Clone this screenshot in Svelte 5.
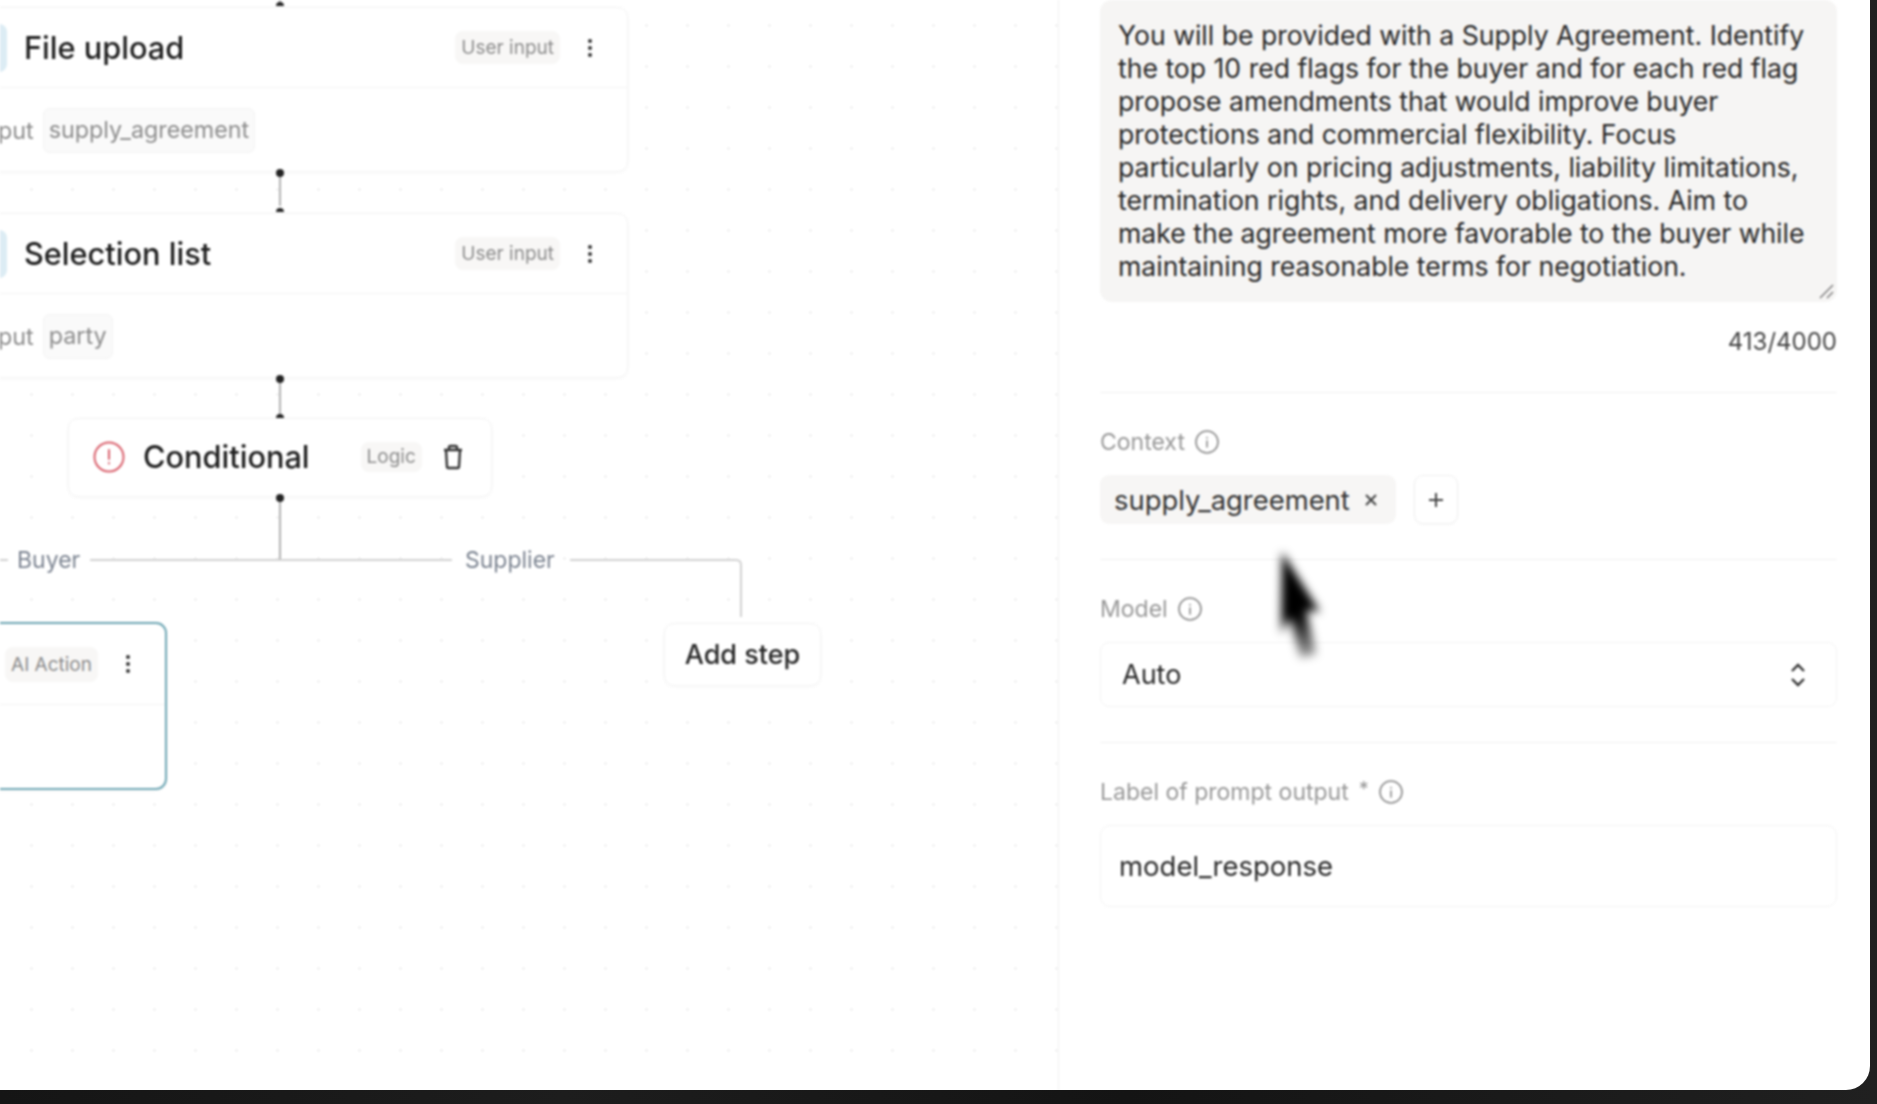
<script>
	const promptText =
		'You will be provided with a Supply Agreement. Identify the top 10 red flags for the buyer and for each red flag propose amendments that would improve buyer protections and commercial flexibility. Focus particularly on pricing adjustments, liability limitations, termination rights, and delivery obligations. Aim to make the agreement more favorable to the buyer while maintaining reasonable terms for negotiation.';

	const inputSteps = [
		{ title: 'File upload', output: 'supply_agreement', top: 7 },
		{ title: 'Selection list', output: 'party', top: 213 }
	];
</script>

{#snippet kebab()}
	<svg class="kebab" width="6" height="20" viewBox="0 0 6 20">
		<circle cx="3" cy="3" r="2" />
		<circle cx="3" cy="10" r="2" />
		<circle cx="3" cy="17" r="2" />
	</svg>
{/snippet}

{#snippet info()}
	<svg class="info" width="24" height="24" viewBox="0 0 24 24" fill="none">
		<circle cx="12" cy="12" r="11" />
		<path d="M12 11v6M12 7.500v.5" />
	</svg>
{/snippet}

<div class="desktop">
	<div class="window">
		<section class="canvas">
			{#each inputSteps as step}
				<article class="node step" style="top: {step.top}px">
					<header class="node-head">
						<span class="tile"></span>
						<h3>{step.title}</h3>
						<span class="badge">User input</span>
						{@render kebab()}
					</header>
					<div class="node-body">
						<span class="io">Input</span>
						<span class="var">{step.output}</span>
					</div>
				</article>
			{/each}

			<article class="node conditional">
				<svg width="32" height="32" viewBox="0 0 32 32" fill="none" class="alert">
					<circle cx="16" cy="16" r="14.500" />
					<path d="M16 9v9M16 22v.5" />
				</svg>
				<h3>Conditional</h3>
				<span class="badge">Logic</span>
				<svg width="22" height="26" viewBox="0 0 22 26" fill="none" class="trash">
					<path d="M2 6h18M7 6V3.500A1.500 1.500 0 0 1 8.500 2h5A1.500 1.500 0 0 1 15 3.500V6M4 6l1 16.500A1.500 1.500 0 0 0 6.500 24h9a1.500 1.500 0 0 0 1.500-1.500L18 6" />
				</svg>
			</article>

			<article class="node action">
				<header class="node-head">
					<span class="badge">AI Action</span>
					{@render kebab()}
				</header>
			</article>

			<button class="node add-step">Add step</button>

			<svg class="wires" width="1058" height="700" viewBox="0 0 1058 700" fill="none">
				<path class="wire" d="M280 0v4M280 176v30M280 382v33M280 500v59" />
				<path class="branch" d="M0 560h8M90 560h362M570 560h166q5 0 5 5v52" />
				<path class="pin" d="M276 6a4 4 0 0 1 8 0zM276 212a4 4 0 0 1 8 0zM276 418a4 4 0 0 1 8 0z" />
				<circle class="pin" cx="280" cy="173" r="4" />
				<circle class="pin" cx="280" cy="379" r="4" />
				<circle class="pin" cx="280" cy="498" r="4" />
			</svg>
			<span class="branch-label buyer">Buyer</span>
			<span class="branch-label supplier">Supplier</span>
		</section>

		<aside class="panel">
			<div class="prompt">
				{promptText}
				<svg class="grip" width="16" height="16" viewBox="0 0 16 16" fill="none">
					<path d="M2 15 15 2M9 15l6-6" />
				</svg>
			</div>
			<div class="counter">413/4000</div>
			<hr />

			<div class="label">Context {@render info()}</div>
			<div class="context-row">
				<span class="context-chip">
					supply_agreement
					<svg width="14" height="14" viewBox="0 0 14 14" fill="none">
						<path d="M2 2l10 10M12 2 2 12" />
					</svg>
				</span>
				<button class="plus" aria-label="Add context">
					<svg width="16" height="16" viewBox="0 0 16 16" fill="none">
						<path d="M8 1v14M1 8h14" />
					</svg>
				</button>
			</div>
			<hr />

			<div class="label">Model {@render info()}</div>
			<div class="select">
				Auto
				<svg width="18" height="28" viewBox="0 0 18 28" fill="none">
					<path d="M3 10l6-6 6 6M3 18l6 6 6-6" />
				</svg>
			</div>
			<hr />

			<div class="label">Label of prompt output <sup>*</sup> {@render info()}</div>
			<div class="text-input">model_response</div>
		</aside>

		<svg class="cursor" width="80" height="130" viewBox="0 0 80 130">
			<defs>
				<linearGradient id="smear" x1="0" y1="0" x2="0" y2="1">
					<stop offset="0" stop-color="#000" />
					<stop offset="0.6" stop-color="#000" />
					<stop offset="1" stop-color="#000" stop-opacity="0.35" />
				</linearGradient>
			</defs>
			<path d="M12 8 50 68 36 66 46 110 30 114 20 74 11 90z" fill="url(#smear)" />
		</svg>
	</div>
</div>

<style>
	:global(body) {
		margin: 0;
		background: #111;
	}

	.desktop {
		width: 1877px;
		height: 1104px;
		overflow: hidden;
		background: linear-gradient(90deg, #151515, #1d1d1d 30%, #141414 60%, #202020);
		font-family: Inter, 'Noto Sans', sans-serif;
		color: #222;
	}

	.window {
		position: relative;
		display: flex;
		width: 1870px;
		height: 1090px;
		overflow: hidden;
		background: #fff;
		border-bottom-right-radius: 24px;
	}

	.canvas {
		position: relative;
		flex: 0 0 1058px;
		overflow: hidden;
		border-right: 1px solid #f1f1f1;
		background-image: radial-gradient(circle, #eeeeee 1px, transparent 1.2px);
		background-size: 41px 41px;
		background-position: 11px 5px;
		filter: blur(0.8px);
	}

	.wires {
		position: absolute;
		inset: 0;
	}
	.wire {
		stroke: #888;
		stroke-width: 1.3;
	}
	.branch {
		stroke: #d2d2d2;
		stroke-width: 2;
	}
	.pin {
		fill: #222;
	}

	.node {
		position: absolute;
		box-sizing: border-box;
		background: #fff;
		border: 1px solid #f3f3f3;
		border-radius: 10px;
		box-shadow: 0 1px 4px rgba(0, 0, 0, 0.03);
	}

	.step {
		left: -100px;
		width: 728px;
		height: 165px;
	}

	.node-head {
		display: flex;
		align-items: center;
		height: 79px;
		padding: 0 34px 0 0;
		border-bottom: 1px solid #f4f4f4;
	}

	.tile {
		width: 48px;
		height: 48px;
		margin: 0 17px 0 58px;
		border-radius: 8px;
		background: #dcecf4;
	}

	h3 {
		margin: 0;
		font-size: 30.700px;
		font-weight: 500;
		color: #1e1e1e;
	}

	.badge {
		display: inline-flex;
		align-items: center;
		box-sizing: border-box;
		height: 33px;
		padding: 0 6px;
		border-radius: 8px;
		background: #f8f7f6;
		font-size: 19px;
		color: #8c8c8c;
		white-space: nowrap;
	}

	.node-head .badge {
		margin-left: auto;
	}

	.kebab {
		margin-left: 27px;
		fill: #333;
	}

	.node-body {
		display: flex;
		align-items: center;
		gap: 9px;
		height: 85px;
		padding-left: 77px;
		font-size: 23.300px;
		color: #8c8c8c;
	}

	.var {
		padding: 6px 5px 8px;
		border: 1px solid #f3f3f3;
		border-radius: 7px;
		background: #fafafa;
	}

	.conditional {
		top: 418px;
		left: 68px;
		display: flex;
		align-items: center;
		width: 424px;
		height: 79px;
		padding: 0 0 2px 24px;
	}
	.alert {
		flex: none;
		margin-right: 18px;
	}
	.alert circle,
	.alert path {
		stroke: #d9606c;
		stroke-width: 2;
		stroke-linecap: round;
	}
	.conditional .badge {
		margin-left: 51px;
		height: 30px;
		padding: 0 6px;
	}
	.trash {
		margin-left: 20px;
		stroke: #333;
		stroke-width: 2.4;
	}

	.action {
		top: 622px;
		left: -100px;
		width: 267px;
		height: 168px;
		border: 2px solid #6ea6b4;
		border-radius: 11px;
	}
	.action .node-head {
		height: 80px;
		padding-right: 34px;
	}
	.action .badge {
		height: 35px;
	}

	.add-step {
		top: 623px;
		left: 664px;
		width: 157px;
		height: 63px;
		font: 500 27px Inter, sans-serif;
		color: #2a2a2a;
	}

	.branch-label {
		position: absolute;
		top: 545px;
		font-size: 23px;
		line-height: 30px;
		color: #7c8491;
	}
	.buyer {
		left: 17px;
	}
	.supplier {
		left: 465px;
	}

	.panel {
		flex: 1;
		padding: 0 33px 0 41px;
		min-width: 0;
		filter: blur(0.8px);
	}

	.prompt {
		position: relative;
		box-sizing: border-box;
		height: 302px;
		padding: 19px 18px 0 18px;
		border-radius: 12px;
		background: #f6f5f4;
		font-size: 26.600px;
		line-height: 33px;
		color: #262626;
	}

	.grip {
		position: absolute;
		right: 3px;
		bottom: 3px;
		stroke: #777;
		stroke-width: 1.4;
	}

	.counter {
		margin-top: 25px;
		font-size: 24px;
		line-height: 30px;
		text-align: right;
		color: #444;
	}

	hr {
		height: 1px;
		margin: 35px 0 0;
		border: 0;
		background: #f1f1f1;
	}

	.label {
		display: flex;
		align-items: center;
		gap: 10px;
		height: 26px;
		margin: 36px 0 20px;
		font-size: 23px;
		color: #989898;
	}
	.label sup {
		align-self: flex-start;
		font-size: 20px;
		line-height: 1;
	}
	.info {
		stroke: #8a8a8a;
		stroke-width: 1.6;
		stroke-linecap: round;
	}

	.context-row {
		display: flex;
		gap: 18px;
		height: 49px;
	}
	.context-chip {
		display: flex;
		align-items: center;
		gap: 14px;
		padding: 0 18px 0 14px;
		border-radius: 9px;
		background: #f7f6f5;
		font-size: 27.400px;
		color: #333;
	}
	.context-chip svg {
		stroke: #444;
		stroke-width: 2;
	}
	.plus {
		width: 44px;
		padding: 0;
		border: 1px solid #f0f0f0;
		border-radius: 9px;
		background: #fff;
		box-shadow: 0 1px 3px rgba(0, 0, 0, 0.03);
	}
	.plus svg {
		display: block;
		margin: auto;
		stroke: #444;
		stroke-width: 2;
	}

	.select {
		display: flex;
		align-items: center;
		justify-content: space-between;
		box-sizing: border-box;
		height: 65px;
		margin-top: 1px;
		padding: 0 29px 0 21px;
		border: 1px solid #f3f3f3;
		border-radius: 9px;
		font-size: 27px;
		color: #2a2a2a;
	}
	.select svg {
		stroke: #333;
		stroke-width: 2.4;
	}

	.text-input {
		display: flex;
		align-items: center;
		box-sizing: border-box;
		height: 82px;
		padding-left: 18px;
		border: 1px solid #f3f3f3;
		border-radius: 10px;
		font-size: 27.500px;
		color: #2a2a2a;
	}

	.cursor {
		position: absolute;
		left: 1270px;
		top: 544px;
		filter: blur(5px);
	}
</style>
